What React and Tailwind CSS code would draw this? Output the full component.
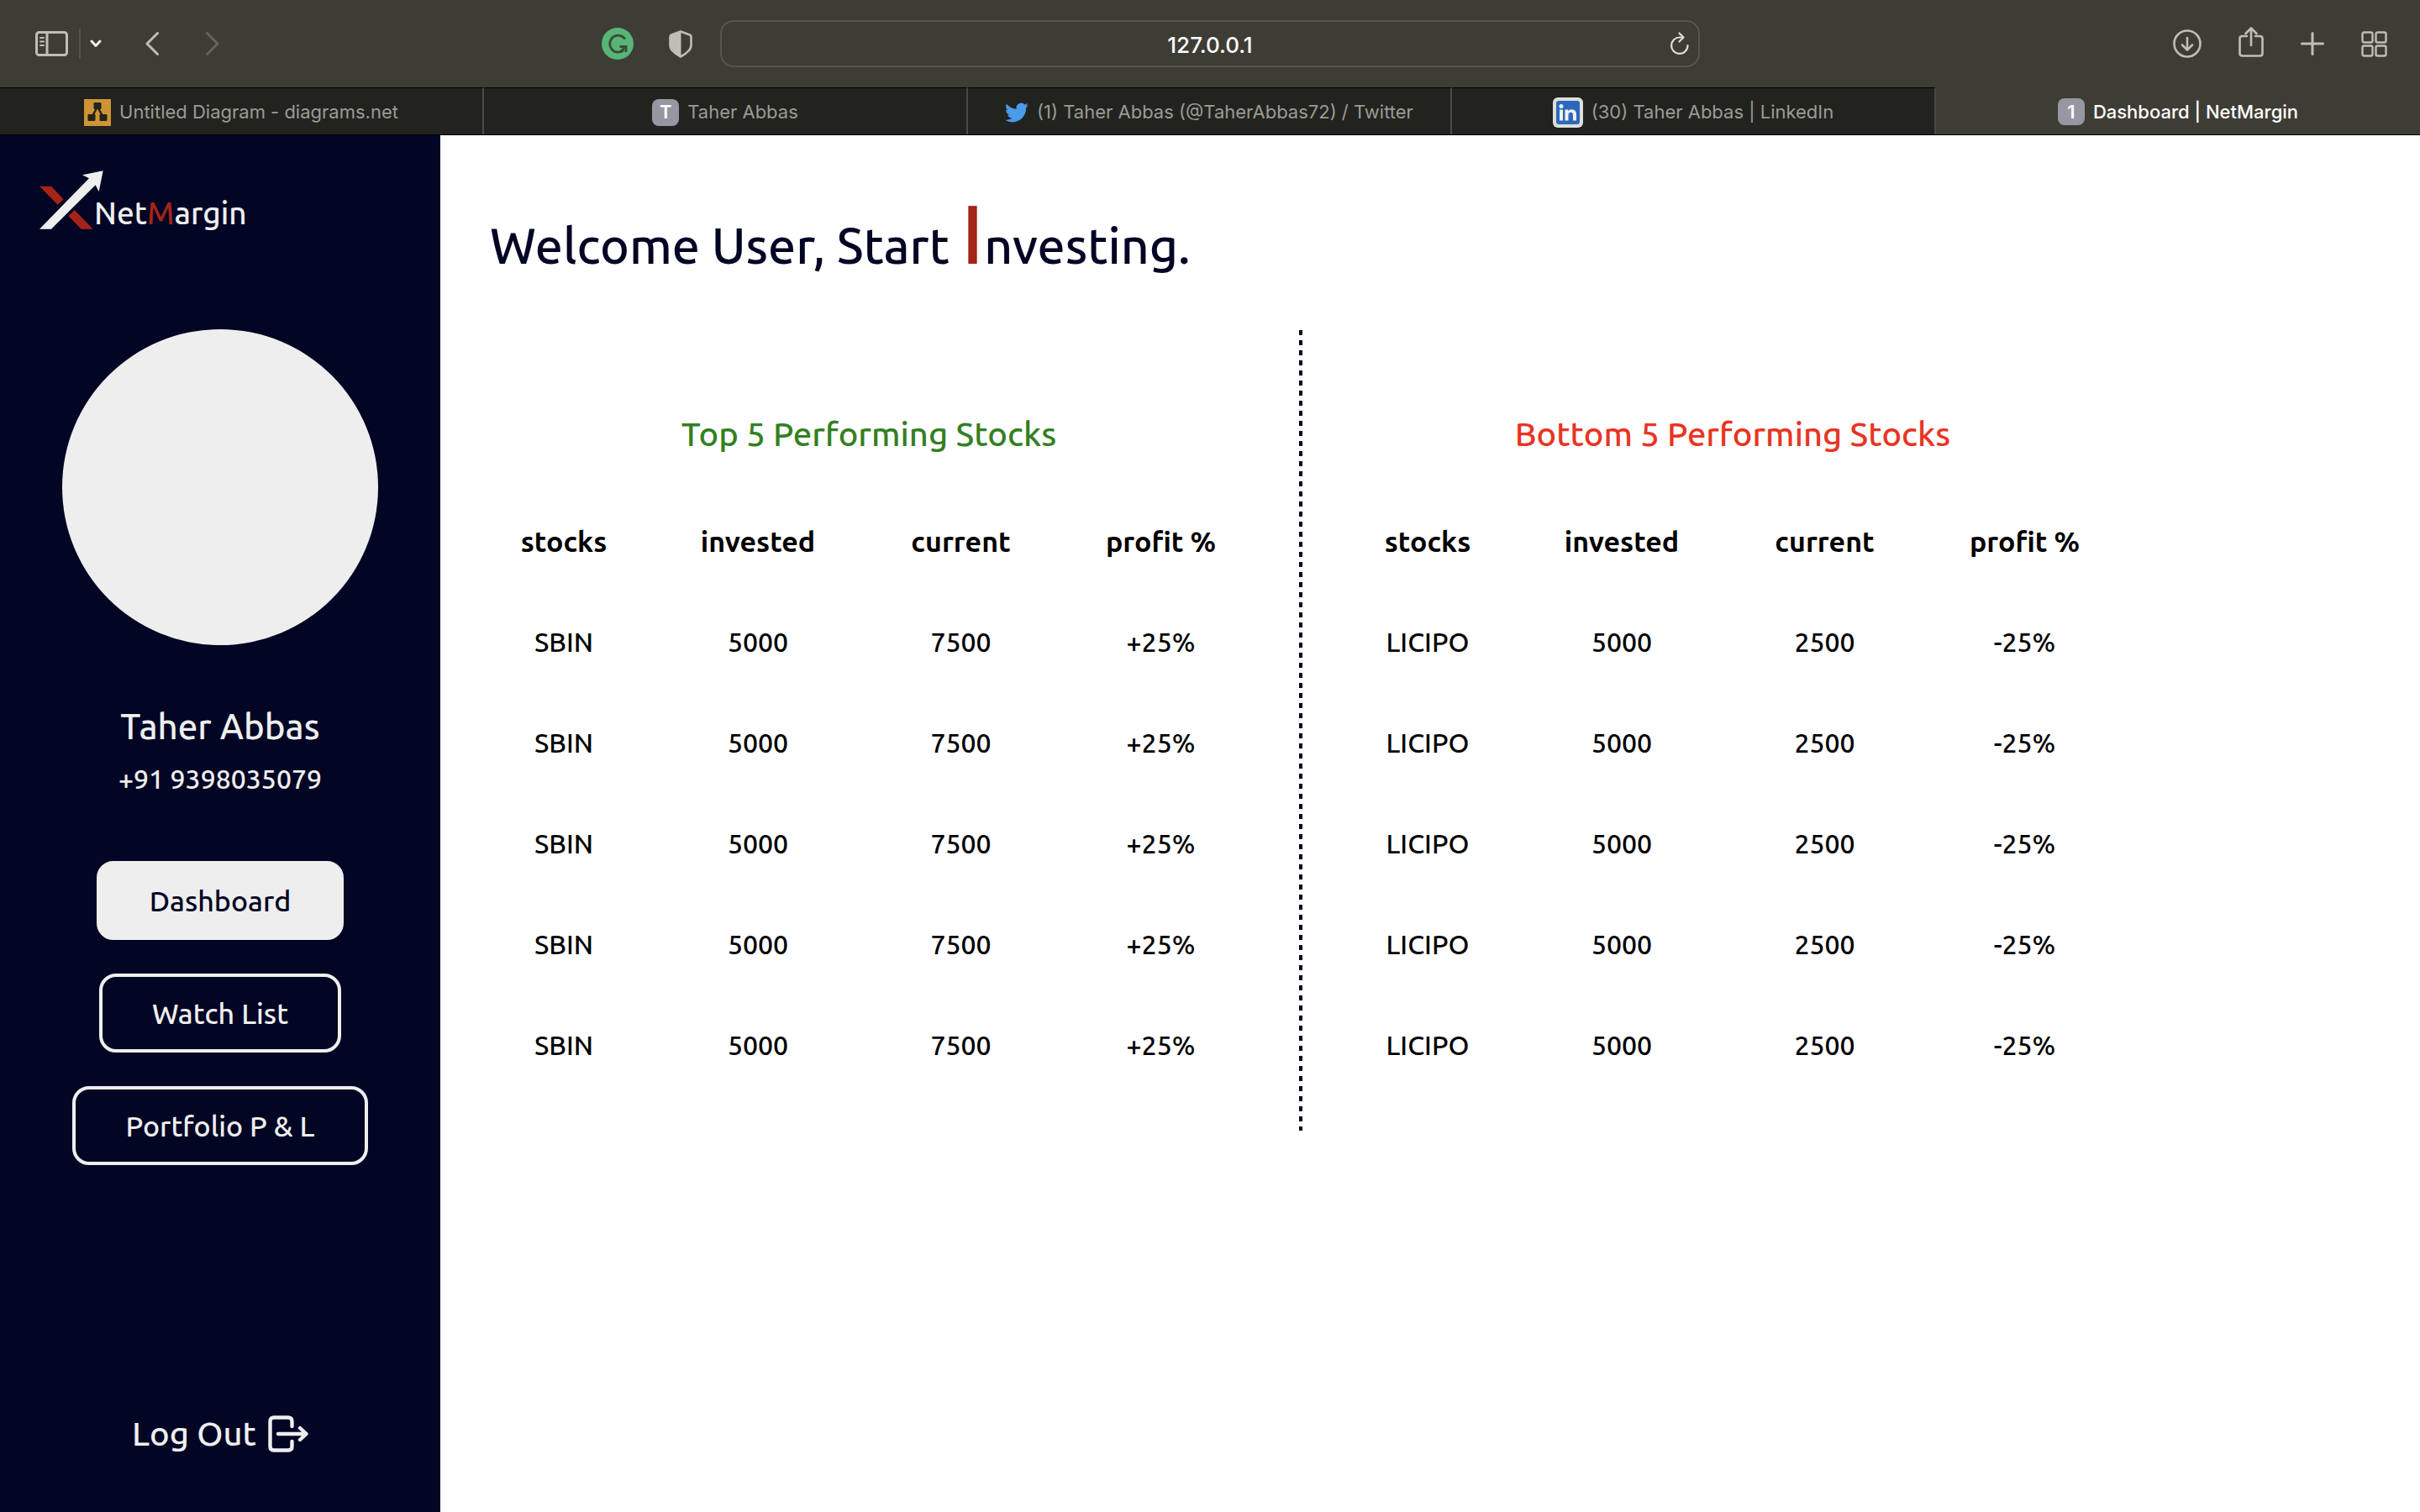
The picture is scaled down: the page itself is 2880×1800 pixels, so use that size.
import React from "react";

const topStocks = Array.from({ length: 5 }, () => ["SBIN", "5000", "7500", "+25%"]);
const bottomStocks = Array.from({ length: 5 }, () => ["LICIPO", "5000", "2500", "-25%"]);

function Icon({ className, viewBox, children, width = 3 }) {
  return (
    <svg
      className={className}
      viewBox={viewBox}
      fill="none"
      stroke="currentColor"
      strokeWidth={width}
      strokeLinecap="round"
      strokeLinejoin="round"
      aria-hidden="true"
    >
      {children}
    </svg>
  );
}

function Toolbar() {
  return (
    <header className="grid h-[104px] grid-cols-[1fr_40.5%_1fr] items-center bg-[#3e3d35] text-[#bfbeb5]">
      <div className="flex items-center pl-[42px] pr-[33px]">
        <button aria-label="Sidebar">
          <Icon className="h-[30px] w-[39px]" viewBox="0 0 39 30">
            <rect x="1.5" y="1.5" width="36" height="27" rx="3" />
            <path d="M14 2v26" />
            <path d="M6 8h4M6 12.500h4M6 17h4" strokeWidth="2" />
          </Icon>
        </button>
        <span className="ml-[13px] h-9 w-0.5 bg-[#54534b]" />
        <button aria-label="Tab groups" className="ml-[11px] text-[#efeee8]">
          <Icon className="h-[10px] w-[14px]" viewBox="0 0 14 10">
            <path d="M2 2l5 5.500l5-5.500" />
          </Icon>
        </button>
        <button aria-label="Back" className="ml-[52px]">
          <Icon className="h-7 w-4" viewBox="0 0 16 28">
            <path d="M14.500 1.500L2 14l12.500 12.500" />
          </Icon>
        </button>
        <button aria-label="Forward" className="ml-14 text-[#65645c]">
          <Icon className="h-7 w-4" viewBox="0 0 16 28">
            <path d="M1.500 1.500L14 14L1.500 26.500" />
          </Icon>
        </button>
        <button aria-label="Grammarly" className="ml-auto">
          <svg className="size-[38px]" viewBox="0 0 38 38" fill="none" aria-hidden="true">
            <circle cx="19" cy="19" r="19" fill="#57b576" />
            <path d="M28 13.500A10 10 0 1 0 26.500 26.500" stroke="#3e4a38" strokeWidth="2.800" />
            <path d="M21.500 22.500H29V29" stroke="#3e4a38" strokeWidth="2.800" />
            <path d="M29 22.500l-7 6" stroke="#3e4a38" strokeWidth="2.500" />
          </svg>
        </button>
        <button aria-label="Privacy report" className="ml-[42px]">
          <svg className="h-[33px] w-7" viewBox="0 0 28 33" aria-hidden="true">
            <path
              d="M14 1.500L25 5.500Q26.500 6 26.500 8V17.500Q26.500 21.500 23.500 24.500Q20 28.500 14 31.500Q8 28.500 4.500 24.500Q1.500 21.500 1.500 17.500V8Q1.500 6 3 5.500Z"
              fill="none"
              stroke="currentColor"
              strokeWidth="2.600"
              strokeLinejoin="round"
            />
            <path d="M14.500 1V32Q8 29 4.500 25Q1 21.500 1 17V6Z" fill="currentColor" />
          </svg>
        </button>
      </div>

      <div className="relative">
        <input
          aria-label="Address"
          defaultValue="127.0.0.1"
          className="block h-14 w-full rounded-2xl border-2 border-[#56554e] bg-transparent pt-0.5 text-center text-[26px] font-medium text-white outline-none"
        />
        <button aria-label="Reload" className="absolute right-3 top-3.5 text-[#dddcd5]">
          <Icon className="h-7 w-6" viewBox="0 0 24 28" width={2.2}>
            <path d="M21.500 16A9.700 9.700 0 1 1 12 6.500H15.500" />
            <path d="M11.500 1.500L16.500 6.500L11.500 11.500" />
          </Icon>
        </button>
      </div>

      <div className="flex items-center justify-end gap-11 pr-[39px]">
        <button aria-label="Downloads">
          <Icon className="size-[34px]" viewBox="0 0 34 34" width={2.6}>
            <circle cx="17" cy="17" r="15.500" />
            <path d="M17 10v14M11 18.500l6 6l6-6" />
          </Icon>
        </button>
        <button aria-label="Share" className="pb-1">
          <Icon className="h-9 w-[30px]" viewBox="0 0 30 36" width={2.6}>
            <path d="M10 11H4.500Q1.500 11 1.500 14V31.500Q1.500 34.500 4.500 34.500H25.500Q28.500 34.500 28.500 31.500V14Q28.500 11 25.500 11H20" />
            <path d="M15 22V2M8.500 8L15 1.500L21.500 8" />
          </Icon>
        </button>
        <button aria-label="New tab">
          <Icon className="size-7" viewBox="0 0 28 28">
            <path d="M14 1.500V26.500M1.500 14H26.500" />
          </Icon>
        </button>
        <button aria-label="Tab overview">
          <Icon className="size-[31px]" viewBox="0 0 31 31" width={2.4}>
            <rect x="1.500" y="1.500" width="12" height="12" rx="2" />
            <rect x="17.500" y="1.500" width="12" height="12" rx="2" />
            <rect x="1.500" y="17.500" width="12" height="12" rx="2" />
            <rect x="17.500" y="17.500" width="12" height="12" rx="2" />
          </Icon>
        </button>
      </div>
    </header>
  );
}

function LetterIcon({ children }) {
  return (
    <span className="flex size-8 items-center justify-center rounded-lg bg-[#9797a3] text-[22px] font-semibold text-white">
      {children}
    </span>
  );
}

function DiagramIcon() {
  return (
    <svg className="size-8" viewBox="0 0 32 32" aria-hidden="true">
      <rect width="32" height="32" fill="#cf9434" />
      <path d="M16 9L9 22M16 9L23 22" stroke="#22231f" strokeWidth="2.500" />
      <g fill="#22231f">
        <rect x="11.500" y="4" width="9" height="8" rx="1.200" />
        <rect x="4.500" y="18" width="9" height="8" rx="1.200" />
        <rect x="18.500" y="18" width="9" height="8" rx="1.200" />
      </g>
    </svg>
  );
}

function TwitterIcon() {
  return (
    <svg className="size-7" viewBox="0 0 24 24" fill="#4a9ceb" aria-hidden="true">
      <path d="M23.953 4.570a10 10 0 0 1-2.825.775 4.958 4.958 0 0 0 2.163-2.723c-.951.555-2.005.959-3.127 1.184a4.920 4.920 0 0 0-8.384 4.482C7.690 8.095 4.067 6.130 1.640 3.162a4.822 4.822 0 0 0-.666 2.475c0 1.710.870 3.213 2.188 4.096a4.904 4.904 0 0 1-2.228-.616v.060a4.923 4.923 0 0 0 3.946 4.827 4.996 4.996 0 0 1-2.212.085 4.936 4.936 0 0 0 4.604 3.417 9.867 9.867 0 0 1-6.102 2.105c-.390 0-.779-.023-1.170-.067a13.995 13.995 0 0 0 7.557 2.209c9.053 0 13.998-7.496 13.998-13.985 0-.210 0-.420-.015-.630A9.935 9.935 0 0 0 24 4.590z" />
    </svg>
  );
}

function LinkedInIcon() {
  return (
    <svg className="size-9" viewBox="0 0 36 36" aria-hidden="true">
      <rect width="36" height="36" rx="6" fill="#deded9" />
      <rect x="4" y="4" width="28" height="28" rx="3" fill="#2b68bd" />
      <g fill="#f1f1ee">
        <circle cx="10" cy="10.500" r="2.500" />
        <rect x="8" y="14.500" width="4" height="13" />
        <path d="M14.500 14.500H18.300V16.300Q19.500 14.200 22.300 14.200Q28 14.200 28 20.500V27.500H24V21Q24 17.700 21.400 17.700Q18.500 17.700 18.500 21V27.500H14.500Z" />
      </g>
    </svg>
  );
}

const tabs = [
  { label: "Untitled Diagram - diagrams.net", icon: <DiagramIcon /> },
  { label: "Taher Abbas", icon: <LetterIcon>T</LetterIcon> },
  { label: "(1) Taher Abbas (@TaherAbbas72) / Twitter", icon: <TwitterIcon /> },
  { label: "(30) Taher Abbas | LinkedIn", icon: <LinkedInIcon /> },
];

function TabBar() {
  return (
    <nav aria-label="Tabs" className="grid h-[57px] grid-cols-5 border-b border-black bg-[#3e3d35] text-[22px]">
      {tabs.map((tab) => (
        <button
          key={tab.label}
          className="flex items-center justify-center gap-2.5 border-r-2 border-t border-r-[#4a4a44] border-t-black bg-[#22231f] pt-0.5 text-[#9b9b94]"
        >
          {tab.icon}
          {tab.label}
        </button>
      ))}
      <button className="flex items-center justify-center gap-2.5 pt-0.5 font-medium text-white">
        <LetterIcon>1</LetterIcon>
        Dashboard | NetMargin
      </button>
    </nav>
  );
}

function Logo() {
  return (
    <a href="#" className="flex items-end self-start pl-[47px]">
      <svg className="h-[70px] w-[76px]" viewBox="141 127 228 210" aria-hidden="true">
        <path d="M141 183H183L227 230L206 249ZM266 268L332 336H290L245 290Z" fill="#a52417" />
        <path d="M141 336L318 155L294 143L368 128L353 203L341 179L183 336Z" fill="#eeeeee" />
      </svg>
      <span className="-ml-[11px] text-[37px] font-medium leading-[38px] text-[#eeeeee]">
        Net<span className="text-[#a52417]">M</span>argin
      </span>
    </a>
  );
}

function Sidebar() {
  return (
    <aside className="flex w-[524px] shrink-0 flex-col items-center bg-[#020524] pb-[63px] pt-[42px] text-[#eeeeee]">
      <Logo />
      <div className="mt-[119px] size-[376px] rounded-full bg-[#eeeeee]" />
      <p className="mt-[67px] text-[42px] font-medium leading-[60px]">Taher Abbas</p>
      <p className="mt-2 text-[32px] font-medium leading-[48px]">+91 9398035079</p>
      <nav aria-label="Main" className="mt-[74px] flex flex-col items-center gap-10 text-[34px] font-medium leading-[86px]">
        <button className="rounded-[20px] border-4 border-[#eeeeee] bg-[#eeeeee] px-[59px] text-[#020524]">
          Dashboard
        </button>
        <button className="rounded-[20px] border-4 border-[#eeeeee] px-[59px]">Watch List</button>
        <button className="rounded-[20px] border-4 border-[#eeeeee] px-[59px]">Portfolio P &amp; L</button>
      </nav>
      <button className="mt-auto flex items-center gap-3.5 text-[40px] font-medium leading-[60px]">
        Log Out
        <Icon className="h-11 w-12" viewBox="0 0 48 44" width={4.4}>
          <path d="M28.500 13V7Q28.500 2.500 24 2.500H7Q2.500 2.500 2.500 7V37Q2.500 41.500 7 41.500H24Q28.500 41.500 28.500 37V31" />
          <path d="M12 22H45M38 15L45.500 22L38 29" />
        </Icon>
      </button>
    </aside>
  );
}

function StockTable({ title, titleClass, rows }) {
  return (
    <section className="pb-[42px] pt-[94px]">
      <h2 className={`text-center text-[40px] font-medium leading-[60px] ${titleClass}`}>{title}</h2>
      <table className="mt-[37px] table-fixed text-center text-[32px] text-black">
        <colgroup>
          <col className="w-[212px]" />
          <col className="w-[250px]" />
          <col className="w-[233px]" />
          <col className="w-[243px]" />
        </colgroup>
        <thead>
          <tr className="h-[120px] text-[34px]">
            {["stocks", "invested", "current", "profit %"].map((name) => (
              <th key={name} scope="col" className="text-center font-semibold">
                {name}
              </th>
            ))}
          </tr>
        </thead>
        <tbody>
          {rows.map((row, i) => (
            <tr key={i} className="h-[120px] font-medium">
              {row.map((cell, j) => (
                <td key={j}>{cell}</td>
              ))}
            </tr>
          ))}
        </tbody>
      </table>
    </section>
  );
}

export default function App() {
  return (
    <div className="flex min-h-screen flex-col bg-white font-['Inter',sans-serif]">
      <Toolbar />
      <TabBar />
      <div className="flex grow font-['Ubuntu','Open_Sans',sans-serif]">
        <Sidebar />
        <main className="grow pl-[41px] pt-[66px]">
          <h1 className="pl-[18px] text-[59px] font-medium leading-none text-[#020524]">
            Welcome User, Start <span className="text-[100px] text-[#a52417]">I</span>nvesting.
          </h1>
          <div className="mt-[66px] flex">
            <StockTable title="Top 5 Performing Stocks" titleClass="text-[#347f22]" rows={topStocks} />
            <div className="mx-[43px] w-1 bg-[repeating-linear-gradient(to_bottom,#020524_0px,#020524_6px,transparent_6px,transparent_12px)]" />
            <StockTable title="Bottom 5 Performing Stocks" titleClass="text-[#e93423]" rows={bottomStocks} />
          </div>
        </main>
      </div>
    </div>
  );
}
